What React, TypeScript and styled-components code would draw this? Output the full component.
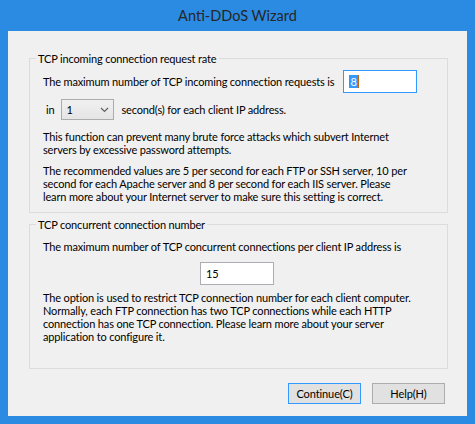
import React from 'react'
import styled, {createGlobalStyle} from 'styled-components'

const GlobalStyle = createGlobalStyle`
  html, body {
    margin: 0;
    padding: 0;
  }
  body {
    background: #2b8be2;
    font-family: Lato, "Liberation Sans", sans-serif;
  }
`

const Window = styled.div`
  width: 475px;
  height: 424px;
  box-sizing: border-box;
  background: #2b8be2;
  display: flex;
  flex-direction: column;
  padding: 0 8px 8px;
`

const TitleBar = styled.div`
  height: 31px;
  display: flex;
  align-items: center;
  justify-content: center;
  font-size: 14.5px;
  color: #262626;
`

const Body = styled.div`
  flex: 1;
  background: #f0f0f0;
  display: flex;
  flex-direction: column;
  padding: 20px 19px 12px 21px;
  gap: 4px;
  font-size: 11px;
  letter-spacing: -0.15px;
  line-height: 13px;
  color: #000;
`

const Group = styled.fieldset<{$grow?: boolean}>`
  margin: 0;
  border: 1px solid #dcdcdc;
  padding: 0 10px 9px 13px;
  flex: ${p => (p.$grow ? 1 : 'none')};
  min-width: 0;
  display: flex;
  flex-direction: column;
`

const Legend = styled.legend`
  margin-left: -7px;
  padding: 0 2px;
  line-height: 15px;
`

const Row = styled.div<{$top: number; $indent?: number; $gap: number}>`
  display: flex;
  align-items: center;
  margin-top: ${p => p.$top}px;
  padding-left: ${p => p.$indent || 0}px;
  gap: ${p => p.$gap}px;
  white-space: nowrap;
`

const TextBox = styled.div<{$focused?: boolean}>`
  width: 74px;
  height: 23px;
  box-sizing: border-box;
  background: #fff;
  border: 1px solid ${p => (p.$focused ? '#3399ff' : '#abadb3')};
  padding-left: 5px;
  display: flex;
  align-items: center;
`

const BoxRow = styled.div`
  display: flex;
  margin-top: 9px;
  padding-left: 157px;
`

const Selected = styled.span`
  background: #3399ff;
  color: #fff;
  padding: 0 1px;
  border-right: 1px solid #c0650f;
  line-height: 13px;
`

const Combo = styled.div`
  width: 53px;
  height: 21px;
  box-sizing: border-box;
  border: 1px solid #acacac;
  background: linear-gradient(#f0f0f0, #e5e5e5);
  display: flex;
  align-items: center;
  justify-content: space-between;
  padding: 0 4px 0 4px;
`

const Para = styled.p<{$top: number}>`
  margin: ${p => p.$top}px 0 0;
  white-space: nowrap;
`

const Buttons = styled.div`
  display: flex;
  justify-content: flex-end;
  gap: 11px;
  margin-top: 10px;
  padding-right: 3px;
`

const Button = styled.button<{$default?: boolean}>`
  width: 73px;
  height: 21px;
  box-sizing: border-box;
  background: #e1e1e1;
  border: 1px solid ${p => (p.$default ? '#3399ff' : '#adadad')};
  font-family: inherit;
  font-size: 11px;
  letter-spacing: -0.1px;
  color: #000;
  padding: 0;
  display: flex;
  align-items: center;
  justify-content: center;
`

const Chevron = () => (
  <svg width="9" height="6" viewBox="0 0 9 6">
    <polyline points="1,1 4.5,4.5 8,1" fill="none" stroke="#606060" strokeWidth="1.2" />
  </svg>
)

const App = () => {
  return (
    <>
      <GlobalStyle />
      <Window>
        <TitleBar>Anti-DDoS Wizard</TitleBar>
        <Body>
          <Group>
            <Legend>TCP incoming connection request rate</Legend>
            <Row $top={4} $gap={9}>
              <span>The maximum number of TCP incoming connection requests is</span>
              <TextBox $focused>
                <Selected>8</Selected>
              </TextBox>
            </Row>
            <Row $top={6} $indent={3} $gap={7}>
              <span>in</span>
              <Combo>
                <span>1</span>
                <Chevron />
              </Combo>
              <span>second(s) for each client IP address.</span>
            </Row>
            <Para $top={10}>
              This function can prevent many brute force attacks which subvert Internet
              <br />
              servers by excessive password attempts.
            </Para>
            <Para $top={8}>
              The recommended values are 5 per second for each FTP or SSH server, 10 per
              <br />
              second for each Apache server and 8 per second for each IIS server. Please
              <br />
              learn more about your Internet server to make sure this setting is correct.
            </Para>
          </Group>
          <Group $grow>
            <Legend>TCP concurrent connection number</Legend>
            <Para $top={8}>The maximum number of TCP concurrent connections per client IP address is</Para>
            <BoxRow>
              <TextBox>15</TextBox>
            </BoxRow>
            <Para $top={6}>
              The option is used to restrict TCP connection number for each client computer.
              <br />
              Normally, each FTP connection has two TCP connections while each HTTP
              <br />
              connection has one TCP connection. Please learn more about your server
              <br />
              application to configure it.
            </Para>
          </Group>
          <Buttons>
            <Button $default>Continue(C)</Button>
            <Button>Help(H)</Button>
          </Buttons>
        </Body>
      </Window>
    </>
  )
}

export default App
